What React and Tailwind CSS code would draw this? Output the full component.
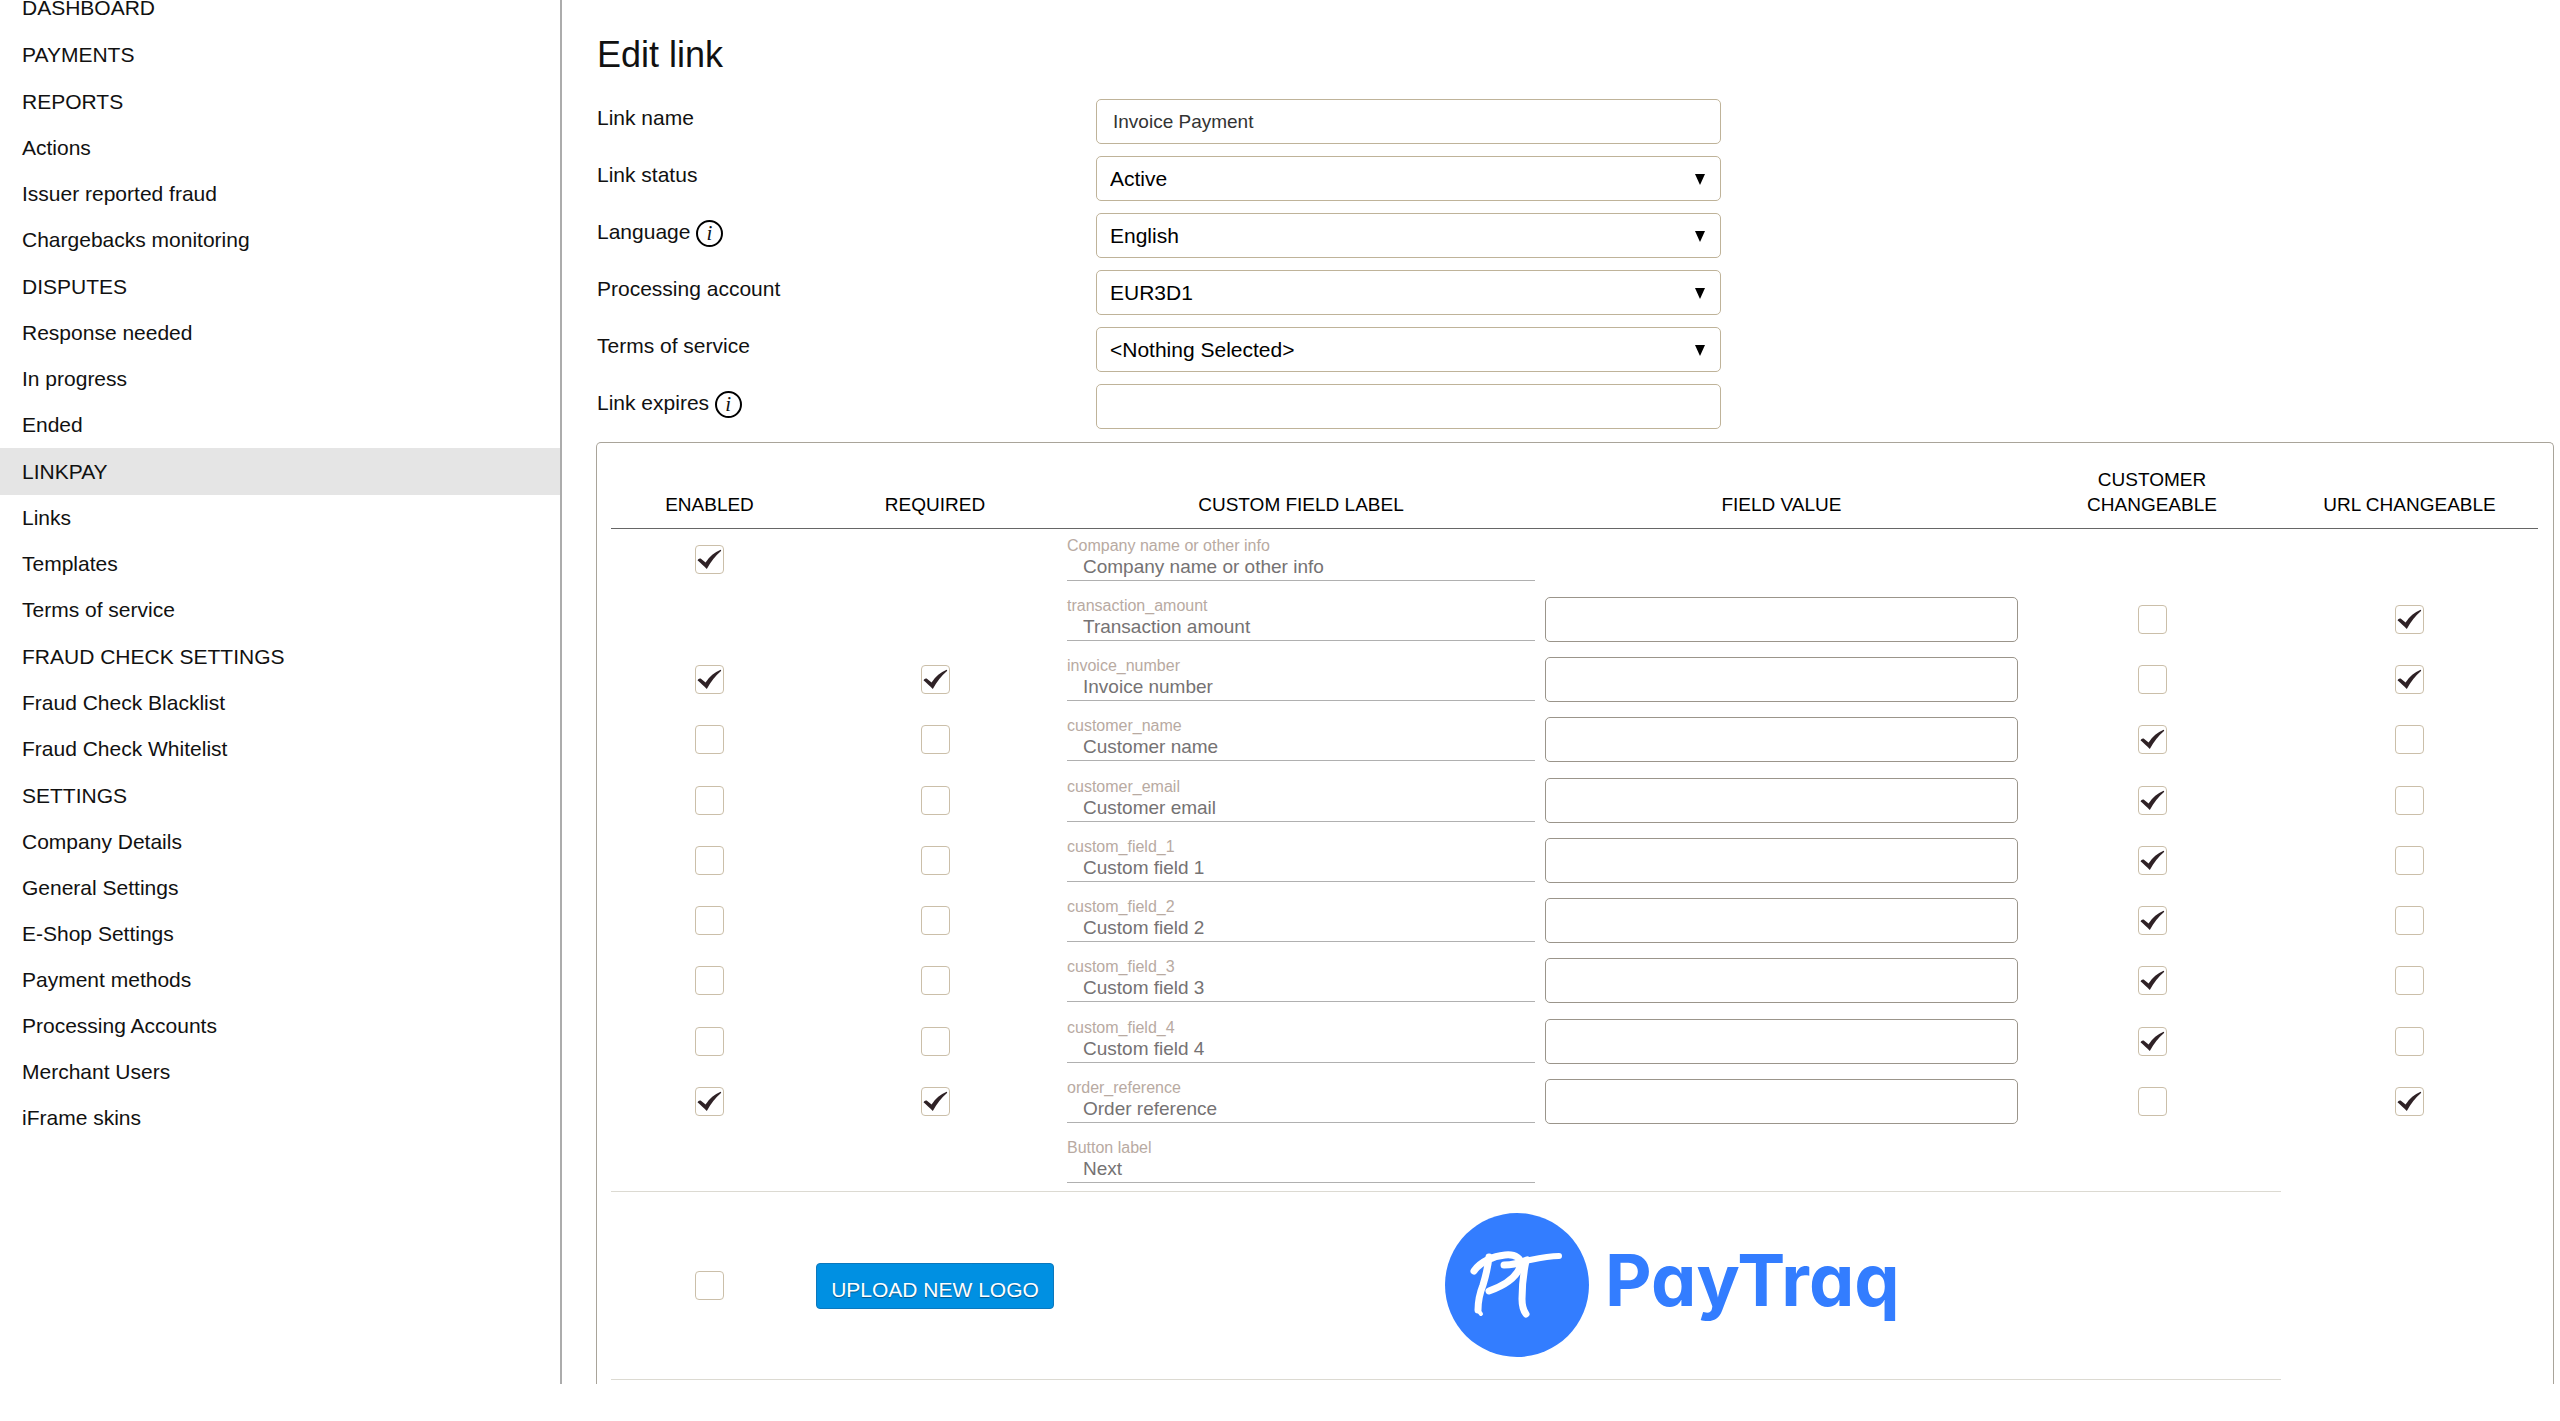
import React from "react";

const NAV = [
  { title: "DASHBOARD", items: [] },
  { title: "PAYMENTS", items: [] },
  { title: "REPORTS", items: ["Actions", "Issuer reported fraud", "Chargebacks monitoring"] },
  { title: "DISPUTES", items: ["Response needed", "In progress", "Ended"] },
  { title: "LINKPAY", active: true, items: ["Links", "Templates", "Terms of service"] },
  { title: "FRAUD CHECK SETTINGS", items: ["Fraud Check Blacklist", "Fraud Check Whitelist"] },
  {
    title: "SETTINGS",
    items: [
      "Company Details",
      "General Settings",
      "E-Shop Settings",
      "Payment methods",
      "Processing Accounts",
      "Merchant Users",
      "iFrame skins",
    ],
  },
];

/* true = ticked, false = clear, null = no box in that cell */
const ROWS = [
  { key: "Company name or other info", value: "Company name or other info", enabled: true, required: null, field: false, customer: null, url: null },
  { key: "transaction_amount", value: "Transaction amount", enabled: null, required: null, field: true, customer: false, url: true },
  { key: "invoice_number", value: "Invoice number", enabled: true, required: true, field: true, customer: false, url: true },
  { key: "customer_name", value: "Customer name", enabled: false, required: false, field: true, customer: true, url: false },
  { key: "customer_email", value: "Customer email", enabled: false, required: false, field: true, customer: true, url: false },
  { key: "custom_field_1", value: "Custom field 1", enabled: false, required: false, field: true, customer: true, url: false },
  { key: "custom_field_2", value: "Custom field 2", enabled: false, required: false, field: true, customer: true, url: false },
  { key: "custom_field_3", value: "Custom field 3", enabled: false, required: false, field: true, customer: true, url: false },
  { key: "custom_field_4", value: "Custom field 4", enabled: false, required: false, field: true, customer: true, url: false },
  { key: "order_reference", value: "Order reference", enabled: true, required: true, field: true, customer: false, url: true },
  { key: "Button label", value: "Next", enabled: null, required: null, field: false, customer: null, url: null },
];

function Sidebar() {
  return (
    <nav className="w-[562px] shrink-0 border-r-2 border-[#acacac]">
      <ul className="-mt-4">
        {NAV.map((group) => (
          <li key={group.title}>
            <a
              href="#"
              className={
                group.active
                  ? "flex h-[47px] items-center bg-[#e5e5e5] pl-[22px]"
                  : "flex h-[47px] items-center pl-[22px]"
              }
            >
              {group.title}
            </a>
            {group.items.length > 0 && (
              <ul>
                {group.items.map((item) => (
                  <li key={item}>
                    <a href="#" className="flex h-[46px] items-center pl-[22px]">
                      {item}
                    </a>
                  </li>
                ))}
              </ul>
            )}
          </li>
        ))}
      </ul>
    </nav>
  );
}

function InfoButton({ label }) {
  return (
    <button
      type="button"
      aria-label={label}
      className="mt-[7px] flex size-[27px] items-center justify-center rounded-full border-2 border-black pr-px font-['Liberation_Serif',serif] text-[21px] leading-none italic"
    >
      i
    </button>
  );
}

function FormRow({ id, label, info, children }) {
  return (
    <div className="grid h-[45px] grid-cols-[500px_minmax(0,625px)]">
      <div className="flex items-start gap-[6px] pl-px">
        <label htmlFor={id} className="leading-[38px]">
          {label}
        </label>
        {info && <InfoButton label={info} />}
      </div>
      {children}
    </div>
  );
}

function TextBox({ id, value }) {
  return (
    <input
      id={id}
      type="text"
      defaultValue={value}
      className="h-[45px] w-full rounded-[5px] border border-[#bfb399] px-4 text-[19px] text-[#333]"
    />
  );
}

function DropDown({ id, value }) {
  return (
    <div className="relative">
      <select
        id={id}
        defaultValue={value}
        className="h-[45px] w-full appearance-none rounded-[5px] border border-[#bfb399] bg-white pr-10 pl-[13px] text-[21px] text-black"
      >
        <option>{value}</option>
      </select>
      <svg
        viewBox="0 0 10 11"
        className="pointer-events-none absolute top-[18px] right-4 h-[11px] w-[10px]"
        aria-hidden="true"
      >
        <path d="M0 0h10L5 11z" fill="#000" />
      </svg>
    </div>
  );
}

function CheckBox({ label, checked }) {
  return (
    <span className="relative mx-auto block size-[29px]">
      <input
        type="checkbox"
        aria-label={label}
        defaultChecked={checked}
        className="peer block size-[29px] appearance-none rounded-[4px] border border-[#cbbfa9] bg-white"
      />
      <svg
        viewBox="0 0 29 29"
        className="pointer-events-none absolute inset-0 hidden size-[29px] peer-checked:block"
        aria-hidden="true"
      >
        <path
          d="M2.5 15.2 Q3.6 13.2 5.6 13.6 L10.6 17.6 C14.5 11.5 19.5 7.2 25.6 4.8 Q26.6 5 26 6 C20.5 10.5 15.8 16.5 11.8 24 C8.8 21 6 18.4 2.5 15.2Z"
          fill="#2f2226"
        />
      </svg>
    </span>
  );
}

function CheckCell({ label, checked }) {
  return <td>{checked !== null && <CheckBox label={label} checked={checked} />}</td>;
}

function PayTraqLogo() {
  return (
    <svg
      viewBox="0 0 454 145"
      className="mx-auto block h-[145px] w-[454px] overflow-visible"
      role="img"
      aria-label="PayTraq"
    >
      <circle cx="72" cy="72" r="72" fill="#337dff" />
      <g fill="none" stroke="#fff" strokeLinecap="round" strokeLinejoin="round">
        <path d="M44 44C43 54 41 62 38 72C34 82 33 90 33 97" strokeWidth="7" />
        <path d="M33 97L36 101" strokeWidth="4" />
        <path d="M29 58C35 49 48 43 60 42C70 41 78 45 75 54C71 65 58 73 44 78" strokeWidth="7" />
        <path d="M59 52C67 52 75 50 82 47" strokeWidth="7" />
        <path d="M80 48C90 46 102 43 114 43" strokeWidth="6" />
        <path d="M81 48C78 62 77 76 77 86C77 92 78 97 81 101" strokeWidth="7" />
      </g>
      <text
        x="160"
        y="93"
        fill="#337dff"
        className="font-['Inter',sans-serif] text-[72px] font-bold [font-feature-settings:'cv11']"
      >
        PayTraq
      </text>
    </svg>
  );
}

function FieldsTable() {
  const head = "border-b border-[#666] px-2 pt-6 pb-[11px] align-bottom font-normal";
  return (
    <table className="w-full table-fixed border-separate border-spacing-0">
      <colgroup>
        <col className="w-[197px]" />
        <col className="w-[254px]" />
        <col className="w-[478px]" />
        <col className="w-[483px]" />
        <col className="w-[258px]" />
        <col className="w-[257px]" />
      </colgroup>
      <thead>
        <tr className="text-[19px] leading-[25px] text-black">
          <th className={head}>ENABLED</th>
          <th className={head}>REQUIRED</th>
          <th className={head}>CUSTOM FIELD LABEL</th>
          <th className={head}>FIELD VALUE</th>
          <th className={head}>
            CUSTOMER
            <br />
            CHANGEABLE
          </th>
          <th className={head}>URL CHANGEABLE</th>
        </tr>
      </thead>
      <tbody>
        {ROWS.map((row) => (
          <tr key={row.key} className="h-[60px] nth-[4n]:h-[61px]">
            <CheckCell label={"Enabled: " + row.value} checked={row.enabled} />
            <CheckCell label={"Required: " + row.value} checked={row.required} />
            <td className="px-[5px] pt-[7px] align-top">
              <label htmlFor={"label-" + row.key} className="block text-base leading-5 text-[#b8aaa2]">
                {row.key}
              </label>
              <input
                id={"label-" + row.key}
                type="text"
                defaultValue={row.value}
                className="block h-[25px] w-full border-b border-[#b0b0b0] pb-0.5 pl-4 text-[19px] text-[#757273]"
              />
            </td>
            <td className="px-[5px]">
              {row.field && (
                <input
                  type="text"
                  aria-label={"Value: " + row.value}
                  className="block h-[45px] w-full rounded-[5px] border border-[#9b958b] px-4 text-[19px]"
                />
              )}
            </td>
            <CheckCell label={"Customer changeable: " + row.value} checked={row.customer} />
            <CheckCell label={"URL changeable: " + row.value} checked={row.url} />
          </tr>
        ))}
        <tr className="h-[189px]">
          <td className="border-y border-[#dcdad2]">
            <CheckBox label="Logo enabled" checked={false} />
          </td>
          <td className="border-y border-[#dcdad2] text-center">
            <button
              type="button"
              className="h-[46px] rounded-[4px] border border-[#0b78bd] bg-[#0090e2] px-[14px] pt-2 align-middle text-[21px] leading-none text-white text-shadow-[0_1px_1px_#00558a]"
            >
              UPLOAD NEW LOGO
            </button>
          </td>
          <td colSpan={3} className="border-y border-[#dcdad2]">
            <PayTraqLogo />
          </td>
          <td />
        </tr>
      </tbody>
    </table>
  );
}

export default function App() {
  return (
    <div className="flex overflow-hidden bg-white font-['Liberation_Sans',Arial,sans-serif] text-[21px] text-[#111]">
      <Sidebar />
      <main className="min-w-0 flex-1 pt-[33px] pr-[6px] pl-[34px]">
        <h1 className="mb-[22px] pl-px text-4xl leading-[44px]">Edit link</h1>
        <form>
          <div className="flex flex-col gap-3">
            <FormRow id="link-name" label="Link name">
              <TextBox id="link-name" value="Invoice Payment" />
            </FormRow>
            <FormRow id="link-status" label="Link status">
              <DropDown id="link-status" value="Active" />
            </FormRow>
            <FormRow id="language" label="Language" info="About language">
              <DropDown id="language" value="English" />
            </FormRow>
            <FormRow id="account" label="Processing account">
              <DropDown id="account" value="EUR3D1" />
            </FormRow>
            <FormRow id="terms" label="Terms of service">
              <DropDown id="terms" value="<Nothing Selected>" />
            </FormRow>
            <FormRow id="expires" label="Link expires" info="About link expiry">
              <TextBox id="expires" value="" />
            </FormRow>
          </div>
          <section className="mt-[13px] rounded-t-[5px] border border-b-0 border-[#a9a49a] pr-[15px] pb-1 pl-[14px]">
            <FieldsTable />
          </section>
        </form>
      </main>
    </div>
  );
}
